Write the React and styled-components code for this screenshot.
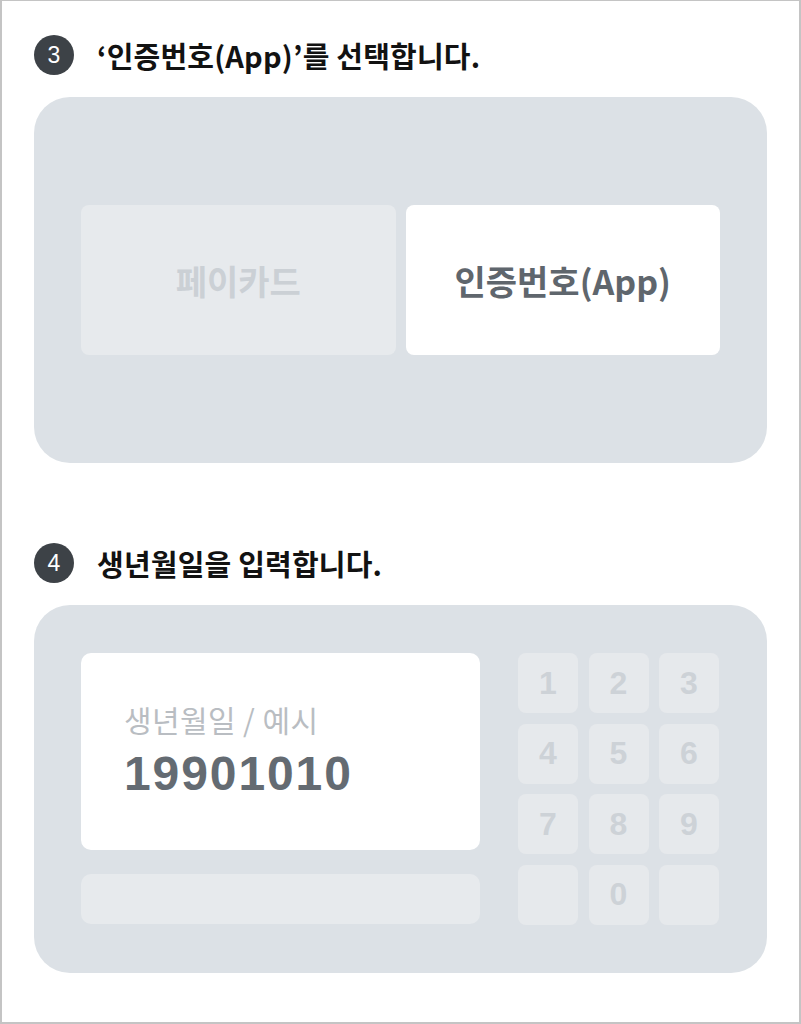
import React from "react";
import styled, { createGlobalStyle } from "styled-components";

const GlobalStyle = createGlobalStyle`
    html, body {
        margin:0;
        padding:0;
        background:#fff;
    }
    body{
        font-family:"Noto Sans CJK KR", "Noto Sans", sans-serif;
    }
`

const keys = ["1", "2", "3", "4", "5", "6", "7", "8", "9", "", "0", ""];

const App = () => {
    return (
        <Page>
            <GlobalStyle />
            <Step>
                <StepHead>
                    <Badge>3</Badge>
                    <Title>‘인증번호(App)’를 선택합니다.</Title>
                </StepHead>
                <Panel $pad="108px 47px">
                    <Choices>
                        <Choice>페이카드</Choice>
                        <Choice $active>인증번호(App)</Choice>
                    </Choices>
                </Panel>
            </Step>
            <Step>
                <StepHead>
                    <Badge>4</Badge>
                    <Title>생년월일을 입력합니다.</Title>
                </StepHead>
                <Panel $pad="48px 48px 48px 47px">
                    <Entry>
                        <InputCol>
                            <InputBox>
                                <Label>생년월일 / 예시</Label>
                                <Value>19901010</Value>
                            </InputBox>
                            <Bar />
                        </InputCol>
                        <Keypad>
                            {keys.map((k, i) => (
                                <Key key={i}>{k}</Key>
                            ))}
                        </Keypad>
                    </Entry>
                </Panel>
            </Step>
        </Page>
    )
}

const Page = styled.div`
    box-sizing:border-box;
    width:801px;
    height:1024px;
    border:2px solid #c4c4c4;
    border-top-width:1px;
    padding:34px 32px 0 32px;
    display:flex;
    flex-direction:column;
    gap:80px;
`

const Step = styled.section`
    display:flex;
    flex-direction:column;
    gap:22px;
`

const StepHead = styled.div`
    display:flex;
    align-items:center;
    gap:23px;
    height:40px;
`

const Badge = styled.span`
    width:40px;
    height:40px;
    border-radius:50%;
    background:#3d4247;
    color:#fff;
    display:flex;
    align-items:center;
    justify-content:center;
    font-family:"Liberation Sans", "Noto Sans", sans-serif;
    font-size:23px;
    font-weight:400;
`

const Title = styled.h2`
    margin:0;
    font-size:29px;
    font-weight:700;
    color:#121212;
    letter-spacing:0.2px;
`

const Panel = styled.div`
    background:#dce1e6;
    border-radius:36px;
    padding:${(p) => p.$pad};
`

const Choices = styled.div`
    display:grid;
    grid-template-columns:1fr 1fr;
    gap:10px;
`

const Choice = styled.div`
    height:150px;
    border-radius:8px;
    background:${(p) => (p.$active ? "#fff" : "#e7eaed")};
    color:${(p) => (p.$active ? "#5f666d" : "#cbd0d5")};
    display:flex;
    align-items:center;
    justify-content:center;
    font-size:34px;
    font-weight:700;
`

const Entry = styled.div`
    display:flex;
    justify-content:space-between;
`

const InputCol = styled.div`
    width:399px;
    display:flex;
    flex-direction:column;
    gap:24px;
`

const InputBox = styled.div`
    height:197px;
    background:#fff;
    border-radius:10px;
    padding:47px 43px 0;
    box-sizing:border-box;
`

const Label = styled.div`
    font-size:30px;
    font-weight:400;
    color:#b9bdc2;
    line-height:38px;
    letter-spacing:0.4px;
`

const Value = styled.div`
    margin-top:8px;
    font-family:"Liberation Sans", Arial, sans-serif;
    font-size:48px;
    font-weight:700;
    color:#646b72;
    letter-spacing:1.9px;
    line-height:56px;
`

const Bar = styled.div`
    height:50px;
    border-radius:10px;
    background:#e7eaed;
`

const Keypad = styled.div`
    display:grid;
    grid-template-columns:repeat(3, 60px);
    grid-auto-rows:60px;
    gap:10.5px 10.5px;
`

const Key = styled.div`
    border-radius:8px;
    background:#e6e9ec;
    color:#cdd2d7;
    display:flex;
    align-items:center;
    justify-content:center;
    font-family:"Liberation Sans", Arial, sans-serif;
    font-size:32px;
    font-weight:700;
`

export default App;
